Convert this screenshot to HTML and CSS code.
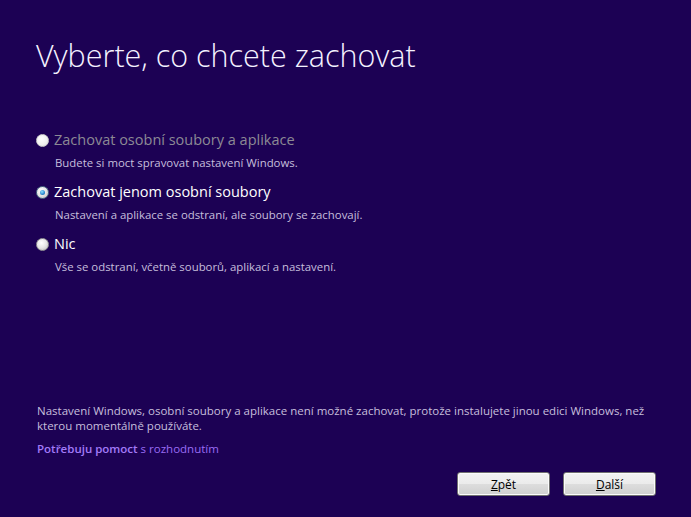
FILE: index.html
```html
<!DOCTYPE html>
<html lang="cs">
<head>
  <meta charset="UTF-8">
  <title>Vyberte, co chcete zachovat</title>
  <link rel="stylesheet" href="styles.css">
</head>
<body>

<div class="page">
  <h1 class="title">Vyberte, co chcete zachovat</h1>

  <div class="options">
    <div class="option disabled">
      <label class="option-label"><span class="radio"></span>Zachovat osobní soubory a aplikace</label>
      <div class="option-desc">Budete si moct spravovat nastavení Windows.</div>
    </div>
    <div class="option">
      <label class="option-label"><span class="radio checked"></span>Zachovat jenom osobní soubory</label>
      <div class="option-desc">Nastavení a aplikace se odstraní, ale soubory se zachovají.</div>
    </div>
    <div class="option">
      <label class="option-label"><span class="radio"></span>Nic</label>
      <div class="option-desc">Vše se odstraní, včetně souborů, aplikací a nastavení.</div>
    </div>
  </div>

  <div class="footer">
    <p class="note">Nastavení Windows, osobní soubory a aplikace není možné zachovat, protože instalujete jinou edici Windows, než kterou momentálně používáte.</p>
    <p class="help"><a href="#"><b>Potřebuju pomoct</b> s rozhodnutím</a></p>
    <div class="buttons">
      <button class="btn"><u>Z</u>pět</button>
      <button class="btn"><u>D</u>alší</button>
    </div>
  </div>
</div>

</body>
</html>
```

FILE: styles.css
```css
html, body {
  margin: 0;
  padding: 0;
  height: 100%;
}
body {
  background-color: #1c0154;
  font-family: "Open Sans", "Noto Sans", sans-serif;
  color: #ffffff;
}
.page {
  height: 100%;
  box-sizing: border-box;
  padding: 35px 26px 0 37px;
  display: flex;
  flex-direction: column;
}
.title {
  margin: 0;
  font-weight: 300;
  font-size: 30.5px;
  line-height: 40px;
  color: #f4f2ff;
  margin-left: -1px;
}
.options {
  margin-top: 55px;
  display: flex;
  flex-direction: column;
  gap: 11px;
}
.option-label {
  display: flex;
  align-items: center;
  gap: 5px;
  font-size: 14.5px;
  line-height: 20px;
  color: #ffffff;
  margin-left: -1px;
}
.option.disabled .option-label {
  color: #8c8a94;
}
.option-desc {
  margin: 5px 0 0 18px;
  font-size: 11.4px;
  line-height: 16px;
  color: #c6bfdc;
}
.radio {
  width: 11px;
  height: 11px;
  border-radius: 50%;
  background: radial-gradient(circle at 40% 35%, #ffffff 0%, #e6e6e6 50%, #b8b8b8 100%);
  border: 1px solid #9a9a9a;
  box-sizing: content-box;
  flex: none;
}
.option.disabled .radio {
  border-color: #cfcfcf;
  background: radial-gradient(circle at 40% 35%, #ffffff 0%, #f0f0f0 60%, #d8d8d8 100%);
}
.radio.checked {
  position: relative;
  border-color: #50708a;
}
.radio.checked::after {
  content: "";
  position: absolute;
  left: 3px;
  top: 3px;
  width: 5px;
  height: 5px;
  border-radius: 50%;
  background: radial-gradient(circle at 40% 35%, #8fe0ff 0%, #2a8ad0 60%, #0e4e82 100%);
}
.footer {
  margin-top: auto;
  padding-bottom: 21px;
}
.note {
  margin: 0;
  font-size: 11.5px;
  line-height: 15px;
  color: #c6bfdc;
}
.help {
  margin: 8px 0 0 0;
  font-size: 11.5px;
  line-height: 15px;
}
.help a {
  color: #9a6cf4;
  text-decoration: none;
}
.help b {
  color: #a27af8;
  font-weight: 600;
}
.buttons {
  margin-top: 16px;
  display: flex;
  justify-content: flex-end;
  gap: 13px;
  padding-right: 9px;
}
.btn {
  width: 93px;
  height: 24px;
  padding: 0;
  font-family: "Open Sans", "Noto Sans", sans-serif;
  font-size: 12px;
  color: #000000;
  border: 1px solid #707070;
  border-radius: 3px;
  background: linear-gradient(#f2f2f2 0%, #ebebeb 50%, #dddddd 51%, #cfcfcf 100%);
  box-shadow: inset 0 0 0 1px #fbfbfb;
}
```
